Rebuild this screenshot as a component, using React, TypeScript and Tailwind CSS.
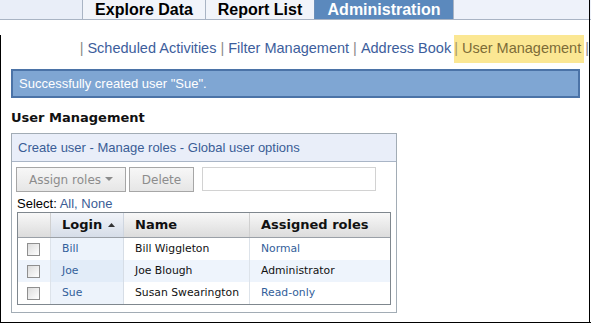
import React from "react";

const arial = { fontFamily: '"Liberation Sans", Arial, sans-serif' };
const dejavu = { fontFamily: '"DejaVu Sans", Verdana, sans-serif' };

function Checkbox() {
  return (
    <div className="w-[13px] h-[13px] border border-[#8f8f8f] bg-gradient-to-br from-[#dcdcdc] to-[#ffffff]" />
  );
}

const rows = [
  { login: "Bill", name: "Bill Wiggleton", role: "Normal", link: true, alt: false },
  { login: "Joe", name: "Joe Blough", role: "Administrator", link: false, alt: true },
  { login: "Sue", name: "Susan Swearington", role: "Read-only", link: true, alt: false },
];

export default function App() {
  return (
    <div className="w-[591px] h-[323px] bg-white overflow-hidden relative">
      {/* tab bar */}
      <div className="flex h-[20px] border-b border-[#a9b4c4] bg-[#e9eef8]" style={arial}>
        <div className="w-[83px] border-r border-[#a9b4c4]" />
        <div className="w-[123px] border-r border-[#a9b4c4] bg-[#f1f4fa] flex items-center justify-center text-[16px] leading-[20px] font-bold text-black">
          Explore Data
        </div>
        <div className="w-[109px] border-r border-[#6b8fba] bg-[#f1f4fa] flex items-center justify-center text-[16px] leading-[20px] font-bold text-black">
          Report List
        </div>
        <div className="w-[138px] bg-[#5b89bd] flex items-center justify-center text-[16px] leading-[20px] font-bold text-white">
          Administration
        </div>
        <div className="flex-1 border-l border-[#a9b4c4] bg-[#eef2fa]" />
      </div>

      <div className="border-l border-black h-[302px] pr-[2px]">
        {/* sub nav */}
        <div className="mt-[15px] h-[28px] flex justify-end items-center text-[14.5px] text-[#3d5e9c]" style={arial}>
          <span className="text-[#8a8a8a]">|</span>
          <span className="ml-[4px]">Scheduled Activities</span>
          <span className="mx-[4px] text-[#8a8a8a]">|</span>
          <span>Filter Management</span>
          <span className="mx-[4px] text-[#8a8a8a]">|</span>
          <span>Address Book</span>
          <span className="ml-[3px] h-[28px] flex items-center bg-[#fbe793] text-[#7d6c37] pr-[3px]">
            <span className="text-[#a89a6a]">|</span>
            <span className="ml-[4px]">User Management</span>
          </span>
          <span className="ml-[1px] text-[#8a8a8a]">|</span>
        </div>

        {/* message */}
        <div
          className="mt-[6px] ml-[10px] w-[569px] h-[29px] border-2 border-[#4b73a7] bg-[#7fa6d3] flex items-center pl-[6px] text-[13px] text-white"
          style={arial}
        >
          Successfully created user "Sue".
        </div>

        {/* heading */}
        <div className="mt-[12px] ml-[10px] h-[16px] text-[13px] leading-[16px] font-bold text-[#111]" style={dejavu}>
          User Management
        </div>

        {/* panel */}
        <div className="mt-[7px] ml-[10px] w-[386px] h-[180px] border border-[#a2acb5]">
          <div
            className="h-[28px] bg-[#e9eef9] border-b border-[#a9b5c6] flex items-center pl-[6px] text-[13px] text-[#3a5d96]"
            style={arial}
          >
            Create user - Manage roles - Global user options
          </div>

          <div className="mt-[5px] ml-[4px] flex items-start" style={dejavu}>
            <div className="w-[110px] h-[25px] border border-[#a6a6a6] bg-gradient-to-b from-[#f7f7f7] to-[#e6e6e6] flex items-center justify-center text-[12px] text-[#8c8c8c]">
              Assign roles
              <svg width="8" height="5" viewBox="0 0 8 5" className="ml-[4px]">
                <polygon points="0,0 8,0 4,4" fill="#8c8c8c" />
              </svg>
            </div>
            <div className="ml-[3px] w-[65px] h-[25px] border border-[#a6a6a6] bg-gradient-to-b from-[#f7f7f7] to-[#e6e6e6] flex items-center justify-center text-[12px] text-[#8c8c8c]">
              Delete
            </div>
            <div className="ml-[8px] w-[174px] h-[24px] border border-[#d2d2d2] bg-white" />
          </div>

          <div className="mt-[4px] pl-[5px] h-[16px] text-[13px] leading-[16px]" style={arial}>
            <span className="text-black">Select: </span>
            <span className="text-[#3a5d96]">All, None</span>
          </div>

          {/* table */}
          <div className="ml-[5px] w-[374px] border border-[#7f878e]" style={dejavu}>
            <div className="grid grid-cols-[33px_73px_126px_1fr] h-[25px] border-b border-[#9aa0a7] text-[13px] font-bold text-[#111]">
              <div className="bg-gradient-to-b from-[#f8f8f8] to-[#dcdcdc] border-r border-[#d0d0d0]" />
              <div className="bg-gradient-to-b from-[#f1f4f9] to-[#d6dde8] border-r border-[#cfd6e0] flex items-center pl-[11px]">
                Login
                <svg width="7" height="4" viewBox="0 0 7 4" className="ml-[6px]">
                  <polygon points="0,4 7,4 3.5,0" fill="#333" />
                </svg>
              </div>
              <div className="bg-gradient-to-b from-[#f8f8f8] to-[#dcdcdc] border-r border-[#d0d0d0] flex items-center pl-[11px]">
                Name
              </div>
              <div className="bg-gradient-to-b from-[#f8f8f8] to-[#dcdcdc] flex items-center pl-[11px]">
                Assigned roles
              </div>
            </div>
            {rows.map((r) => (
              <div
                key={r.login}
                className={
                  "grid grid-cols-[33px_73px_126px_1fr] h-[22px] text-[10.8px] " +
                  (r.alt ? "bg-[#eef4fc]" : "bg-white")
                }
              >
                <div className="border-r border-[#dde3ea] flex items-center pl-[9px]">
                  <Checkbox />
                </div>
                <div
                  className={
                    "border-r border-[#d6dde6] flex items-center pl-[11px] text-[#32609a] " +
                    (r.alt ? "bg-[#e2ecf8]" : "bg-[#edf3fb]")
                  }
                >
                  {r.login}
                </div>
                <div className="border-r border-[#dde3ea] flex items-center pl-[11px] text-[#111]">{r.name}</div>
                <div className={"flex items-center pl-[11px] " + (r.link ? "text-[#32609a]" : "text-[#111]")}>
                  {r.role}
                </div>
              </div>
            ))}
          </div>
        </div>
      </div>
      <div className="absolute bottom-0 left-0 w-full h-[1px] bg-black" />
      <div className="absolute top-0 right-[1px] w-[1px] h-full bg-black" />
    </div>
  );
}
